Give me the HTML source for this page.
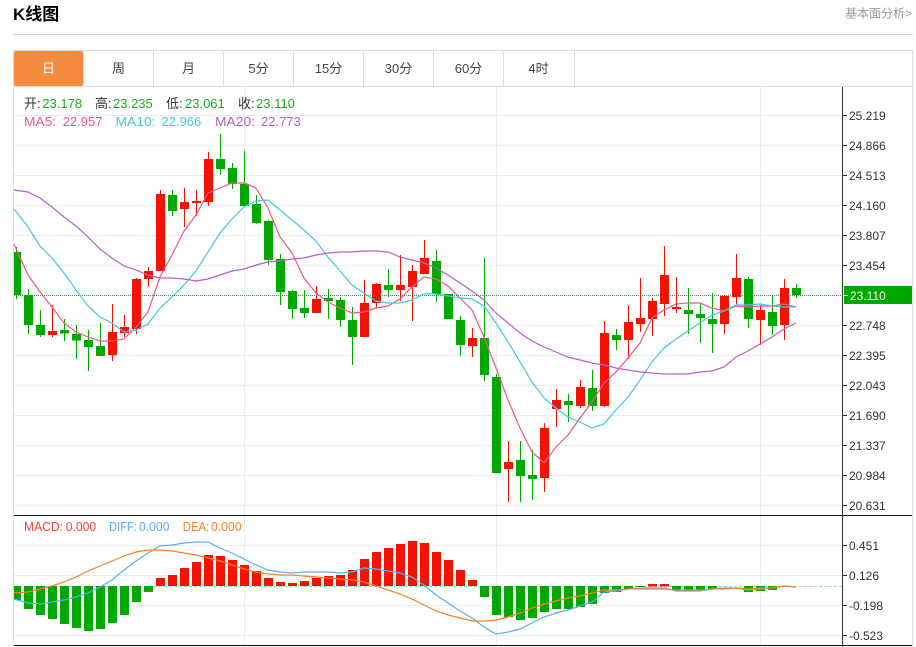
<!DOCTYPE html>
<html lang="zh">
<head>
<meta charset="utf-8">
<title>K线图</title>
<style>
html,body{margin:0;padding:0;background:#fff;width:916px;height:647px;overflow:hidden}
svg{display:block}
text{font-family:"Liberation Sans","Noto Sans CJK SC",sans-serif;font-size:13px}
.ax{font-size:12px;fill:#333}
.tab{font-size:13px;fill:#444;text-anchor:middle}
</style>
</head>
<body>
<svg width="916" height="647" viewBox="0 0 916 647" xmlns="http://www.w3.org/2000/svg">
<text x="13" y="20" style="font-size:17px;font-weight:bold" fill="#000">K线图</text>
<text x="845" y="17.5" style="font-size:12px" fill="#999">基本面分析&gt;</text>
<path d="M13 34.5H913" stroke="#d0d0d0" fill="none"/>

<!-- frame -->
<path d="M13.5 50.5H912.5V647M13.5 50V647M13 86.5H912.5" stroke="#dddddd" fill="none"/>
<path d="M83.5 50V86M153.5 50V86M223.5 50V86M293.5 50V86M363.5 50V86M433.5 50V86M503.5 50V86M574.5 50V86" stroke="#dddddd" fill="none"/>
<rect x="14" y="51" width="69" height="35" rx="2" fill="#f58b3f"/>
<text x="48.5" y="73" class="tab" style="fill:#fff">日</text>
<text x="118.5" y="73" class="tab">周</text>
<text x="188.5" y="73" class="tab">月</text>
<text x="258.5" y="73" class="tab">5分</text>
<text x="328.5" y="73" class="tab">15分</text>
<text x="398.5" y="73" class="tab">30分</text>
<text x="468.5" y="73" class="tab">60分</text>
<text x="538.5" y="73" class="tab">4时</text>

<!-- grid -->
<path d="M14 115.5H843M14 145.5H843M14 175.5H843M14 205.5H843M14 235.5H843M14 265.5H843M14 325.5H843M14 355.5H843M14 385.5H843M14 415.5H843M14 445.5H843M14 475.5H843M14 505.5H843M14 545.5H843M14 575.5H843M14 605.5H843M14 635.5H843M244.5 87V645M496.5 87V645M760.5 87V645" stroke="#e6edf3" fill="none"/>
<path d="M14 295.5H843" stroke="#1fa855" stroke-dasharray="1 1" fill="none"/>

<!-- candles -->
<path stroke="#00a800" fill="none" d="M16.5 247V299M28.5 289V334M40.5 310V337M64.5 319V341M76.5 325V359M88.5 330V371M100.5 323V356M172.5 190V216M220.5 134V175M232.5 163V189M244.5 151V207M256.5 195V224M268.5 220V265M280.5 254V305M292.5 290V319M304.5 290V318M328.5 289V319M340.5 297V327M352.5 307V365M388.5 269V297M436.5 250V302M448.5 294V319M460.5 316V356M484.5 258V381M496.5 374V473M520.5 441V502M532.5 450V500M568.5 394V422M592.5 370V411M616.5 329V350M688.5 288V334M700.5 303V343M712.5 293V353M748.5 277V328M772.5 295V335M796.5 284V298"/>
<path fill="#00a800" d="M14 252h7v43h-7zM24 295h9v30h-9zM36 325h9v10h-9zM60 330h9v3.500h-9zM72 334h9v6.500h-9zM84 340h9v7h-9zM96 346h9v10h-9zM168 195h9v16h-9zM216 159h9v10h-9zM228 168h9v16h-9zM240 184h9v22h-9zM252 204h9v19h-9zM264 221h9v39h-9zM276 259h9v33h-9zM288 291h9v18h-9zM300 308h9v5h-9zM324 298h9v3h-9zM336 300h9v20h-9zM348 320h9v17h-9zM384 285h9v5h-9zM432 261h9v33h-9zM444 294h9v25h-9zM456 320h9v25h-9zM480 338h9v37h-9zM492 377h9v96h-9zM516 460h9v16h-9zM528 475h9v4h-9zM564 401h9v4h-9zM588 388h9v18h-9zM612 335h9v5h-9zM684 310h9v4h-9zM696 314h9v4h-9zM708 319h9v5h-9zM744 279h9v40h-9zM768 312h9v14h-9zM792 288h9v7h-9z"/>
<path stroke="#f51200" fill="none" d="M52.500 305V337M112.500 304V361M124.500 315V337M136.500 278V334M148.500 267V287M160.500 190V271M184.500 188V227M196.500 190V216M208.500 152V206M316.500 286V313M364.500 280V337M376.500 283V308M400.500 255V301M412.500 265V321M424.500 240V274M472.500 328V357M508.500 441V502M544.500 423V492M556.500 389V427M580.500 380V408M604.500 321V407M628.500 305V359M640.500 278V332M652.500 298V336M664.500 246V316M676.500 277V313M724.500 295V334M736.500 254V304M760.500 305V345M784.500 279V340"/>
<path fill="#f51200" d="M48 331h9v4h-9zM108 332h9v23h-9zM120 327h9v6h-9zM132 279h9v50h-9zM144 271h9v8h-9zM156 194h9v77h-9zM180 202h9v7h-9zM192 201h9v2h-9zM204 159h9v43h-9zM312 299h9v14h-9zM360 303h9v34h-9zM372 284h9v19h-9zM396 285h9v5h-9zM408 271h9v16h-9zM420 258h9v16h-9zM468 338h9v8h-9zM504 462h9v7h-9zM540 428h9v50h-9zM552 400h9v9h-9zM576 387h9v19h-9zM600 333h9v73h-9zM624 322h9v18h-9zM636 318h9v6h-9zM648 301h9v18h-9zM660 275h9v29h-9zM672 307h9v2h-9zM720 296h9v28h-9zM732 278h9v19h-9zM756 310h9v10h-9zM780 288h9v37h-9z"/>

<!-- MA lines -->
<polyline fill="none" stroke="#f0568c" stroke-width="1.200" points="14,244 28,275 40,292 52,307 64,323 76,332 88,337 100,341 112,341 124,339 136,327 148,312 160,277 172,255 184,231 196,215 208,193 220,188 232,183 244,183 256,188 268,208 280,237 292,253 304,278 316,293 328,302 340,308 352,313 364,312 376,308 388,306 400,299 412,287 424,277 436,279 448,286 460,298 472,310 484,337 496,368 508,400 520,428 532,452 544,463 556,447 568,435 580,418 592,402 604,383 616,372 628,358 640,343 652,318 664,310 676,304 688,303 700,303 712,308 724,311 736,306 748,307 760,306 772,306 784,304 796,307"/>
<polyline fill="none" stroke="#3fc9e2" stroke-width="1.200" points="14,209 28,227 40,246 52,258 64,273 76,290 88,306 100,317 112,323 124,332 136,330 148,324 160,308 172,297 184,285 196,271 208,252 220,233 232,219 244,207 256,201 268,200 280,210 292,220 304,230 316,241 328,257 340,271 352,285 364,293 376,301 388,303 400,303 412,300 424,294 436,294 448,296 460,298 472,299 484,306 496,323 508,342 520,362 532,382 544,398 556,408 568,417 580,422 592,428 604,424 616,410 628,397 640,380 652,362 664,348 676,339 688,331 700,323 712,315 724,311 736,305 748,305 760,304 772,306 784,307 796,307"/>
<polyline fill="none" stroke="#b65fd0" stroke-width="1.200" points="14,190 28,192 40,198 52,207 64,217 76,226 88,237 100,249 112,258 124,266 136,270 148,275 160,278 172,278 184,279 196,281 208,279 220,275 232,271 244,269 256,265 268,262 280,261 292,259 304,258 316,255 328,253 340,252 352,252 364,251 376,251 388,252 400,257 412,260 424,263 436,268 448,275 460,283 472,291 484,300 496,313 508,323 520,333 532,341 544,347 556,352 568,357 580,360 592,363 604,365 616,368 628,370 640,372 652,373 664,374 676,374 688,374 700,372 712,371 724,367 736,357 748,351 760,344 772,337 784,329 796,323"/>

<!-- MACD -->
<path d="M14 586.500H843" stroke="#8fd6f2" stroke-dasharray="3 2" fill="none"/>
<path fill="#00a800" d="M14 586h7v14h-7zM24 586h9v23h-9zM36 586h9v29h-9zM48 586h9v33h-9zM60 586h9v38h-9zM72 586h9v42h-9zM84 586h9v45h-9zM96 586h9v43h-9zM108 586h9v37h-9zM120 586h9v29h-9zM132 586h9v16h-9zM144 586h9v6h-9zM480 586h9v11h-9zM492 586h9v29h-9zM504 586h9v31h-9zM516 586h9v34h-9zM528 586h9v32h-9zM540 586h9v26h-9zM552 586h9v23h-9zM564 586h9v23h-9zM576 586h9v21h-9zM588 586h9v18h-9zM600 586h9v7h-9zM612 586h9v6h-9zM624 586h9v3h-9zM636 586h9v1h-9zM672 586h9v4h-9zM684 586h9v4h-9zM696 586h9v5h-9zM708 586h9v3h-9zM744 586h9v6h-9zM756 586h9v5h-9zM768 586h9v4h-9z"/>
<path fill="#f51200" d="M156 578h9v8h-9zM168 575h9v11h-9zM180 568h9v18h-9zM192 562h9v24h-9zM204 555h9v31h-9zM216 556h9v30h-9zM228 560h9v26h-9zM240 565h9v21h-9zM252 571h9v15h-9zM264 578h9v8h-9zM276 582h9v4h-9zM288 583h9v3h-9zM300 581h9v5h-9zM312 578h9v8h-9zM324 576h9v10h-9zM336 575h9v11h-9zM348 570h9v16h-9zM360 559h9v27h-9zM372 552h9v34h-9zM384 548h9v38h-9zM396 544h9v42h-9zM408 541h9v45h-9zM420 543h9v43h-9zM432 552h9v34h-9zM444 560h9v26h-9zM456 570h9v16h-9zM468 580h9v6h-9zM648 584h9v2.500h-9zM660 584h9v2.500h-9z"/>
<polyline fill="none" stroke="#5aaef5" stroke-width="1.200" points="14,599 28,603 40,604 52,602 64,600 76,597 88,593 100,587 112,580 124,570 136,561 148,553 160,546 172,545 184,543 196,542 208,542 220,548 232,553 244,559 256,565 268,570 280,572 292,573 304,572 316,572 328,572 340,573 352,572 364,568 376,569 388,571 400,573 412,577 424,585 436,595 448,603 460,611 472,618 484,627 496,634 508,632 520,629 532,623 544,617 556,613 568,610 580,606 592,602 604,592 616,591 628,589 640,588 652,588 664,588 676,591 688,591 700,591 712,589 724,588 736,588 748,590 760,589 772,588 784,586 796,587"/>
<polyline fill="none" stroke="#ff7f27" stroke-width="1.200" points="14,593 28,592 40,589 52,586 64,582 76,577 88,571 100,566 112,561 124,556 136,552 148,550 160,550 172,551 184,553 196,555 208,558 220,561 232,565 244,569 256,572 268,574 280,575 292,575 304,576 316,577 328,578 340,579 352,580 364,582 376,586 388,590 400,594 412,599 424,605 436,611 448,615 460,618 472,621 484,621 496,620 508,617 520,613 532,608 544,604 556,601 568,598 580,596 592,593 604,590 616,590 628,589 640,589 652,589 664,589 676,590 688,590 700,590 712,589 724,589 736,588 748,589 760,588 772,588 784,586 796,587"/>

<!-- panel borders -->
<path d="M14 515.500H912M14 645.500H912" stroke="#111" fill="none"/>
<path d="M842.500 87V647" stroke="#333" fill="none"/>
<path d="M843 115.500h4M843 145.500h4M843 175.500h4M843 205.500h4M843 235.500h4M843 265.500h4M843 325.500h4M843 355.500h4M843 385.500h4M843 415.500h4M843 445.500h4M843 475.500h4M843 505.500h4M843 545.500h4M843 575.500h4M843 605.500h4M843 635.500h4" stroke="#333" fill="none"/>

<!-- axis labels -->
<text x="849" y="120" class="ax">25.219</text>
<text x="849" y="150" class="ax">24.866</text>
<text x="849" y="180" class="ax">24.513</text>
<text x="849" y="210" class="ax">24.160</text>
<text x="849" y="240" class="ax">23.807</text>
<text x="849" y="270" class="ax">23.454</text>
<rect x="844" y="286" width="68" height="18" fill="#00a800"/>
<path d="M844 295.500h4" stroke="#fff" fill="none"/>
<text x="850" y="300" class="ax" style="fill:#fff">23.110</text>
<text x="849" y="330" class="ax">22.748</text>
<text x="849" y="360" class="ax">22.395</text>
<text x="849" y="390" class="ax">22.043</text>
<text x="849" y="420" class="ax">21.690</text>
<text x="849" y="450" class="ax">21.337</text>
<text x="849" y="480" class="ax">20.984</text>
<text x="849" y="510" class="ax">20.631</text>
<text x="849" y="550" class="ax">0.451</text>
<text x="849" y="580" class="ax">0.126</text>
<text x="849" y="610" class="ax">-0.198</text>
<text x="849" y="640" class="ax">-0.523</text>

<!-- legends -->
<text x="24" y="108" fill="#333">开:</text><text x="42.300" y="108" fill="#1aad1a">23.178</text>
<text x="95" y="108" fill="#333">高:</text><text x="113" y="108" fill="#1aad1a">23.235</text>
<text x="166" y="108" fill="#333">低:</text><text x="185" y="108" fill="#1aad1a">23.061</text>
<text x="238" y="108" fill="#333">收:</text><text x="256" y="108" fill="#1aad1a">23.110</text>
<text x="24" y="126" fill="#f0568c" textLength="32" lengthAdjust="spacingAndGlyphs">MA5:</text><text x="62.700" y="126" fill="#f0568c">22.957</text>
<text x="115.500" y="126" fill="#3fc9e2" textLength="40" lengthAdjust="spacingAndGlyphs">MA10:</text><text x="161.500" y="126" fill="#3fc9e2">22.966</text>
<text x="215" y="126" fill="#b65fd0" textLength="40" lengthAdjust="spacingAndGlyphs">MA20:</text><text x="261" y="126" fill="#b65fd0">22.773</text>
<text x="24" y="531" fill="#f44336" textLength="39" lengthAdjust="spacingAndGlyphs">MACD:</text><text x="65.700" y="531" fill="#f44336" textLength="30.500" lengthAdjust="spacingAndGlyphs">0.000</text>
<text x="109" y="531" fill="#5aaef5" textLength="28" lengthAdjust="spacingAndGlyphs">DIFF:</text><text x="139" y="531" fill="#5aaef5" textLength="30.500" lengthAdjust="spacingAndGlyphs">0.000</text>
<text x="182.700" y="531" fill="#ff7f27" textLength="26.500" lengthAdjust="spacingAndGlyphs">DEA:</text><text x="211" y="531" fill="#ff7f27" textLength="30.500" lengthAdjust="spacingAndGlyphs">0.000</text>
</svg>
</body>
</html>
